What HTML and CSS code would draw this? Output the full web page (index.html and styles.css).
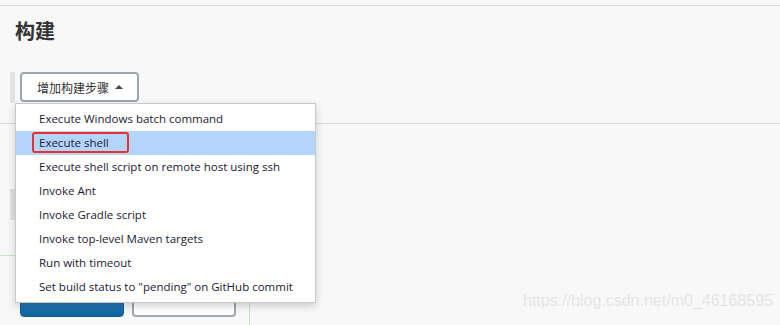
FILE: index.html
```html
<!DOCTYPE html>
<html lang="zh-CN">
<head>
    <meta charset="UTF-8">
    <meta name="viewport" content="width=device-width, initial-scale=1.0">
    <title>构建</title>
    <link rel="stylesheet" href="styles.css">
</head>
<body>
    <div class="top-line"></div>
    <section class="build-section">
        <h2 class="section-title">构建</h2>

        <div class="step-block">
            <button class="add-step">增加构建步骤 <span class="caret"></span></button>
        </div>
        <div class="divider"></div>

        <div class="step-block step-block-lower"></div>

        <div class="form-footer">
            <button class="btn btn-primary">保存</button>
            <button class="btn btn-default">应用</button>
        </div>

        <ul class="step-menu">
            <li>Execute Windows batch command</li>
            <li class="active"><span class="marked">Execute shell</span></li>
            <li>Execute shell script on remote host using ssh</li>
            <li>Invoke Ant</li>
            <li>Invoke Gradle script</li>
            <li>Invoke top-level Maven targets</li>
            <li>Run with timeout</li>
            <li>Set build status to "pending" on GitHub commit</li>
        </ul>
    </section>

    <div class="watermark">https://blog.csdn.net/m0_46168595</div>
</body>
</html>
```

FILE: styles.css
```css
body {
    margin: 0;
    background: #f8f8f8;
    font-family: "Open Sans", "Noto Sans CJK SC", sans-serif;
    color: #333;
    height: 325px;
    overflow: hidden;
}
.top-line {
    height: 5px;
    border-bottom: 1px solid #d6d6d6;
}
.build-section {
    position: relative;
}
.section-title {
    margin: 11px 0 0 15px;
    font-family: "Noto Sans CJK SC", sans-serif;
    font-size: 20px;
    line-height: 28px;
    font-weight: bold;
    color: #333;
}
.step-block {
    margin: 27px 0 0 10px;
    padding-left: 5px;
    border-left: 5px solid #e2e2e2;
    height: 31px;
}
.add-step {
    height: 30px;
    padding: 0 14px 0 15px;
    background: #fff;
    border: 2px solid #9da7b1;
    border-radius: 4px;
    font-family: "Noto Sans CJK SC", sans-serif;
    font-size: 12px;
    color: #333;
    display: flex;
    align-items: center;
    gap: 5px;
}
.caret {
    width: 0;
    height: 0;
    border-left: 4px solid transparent;
    border-right: 4px solid transparent;
    border-bottom: 4px solid #444;
    margin-left: 1px;
}
.divider {
    margin-top: 20px;
    border-top: 1px solid #d8d8d8;
}
.step-block-lower {
    margin-top: 65px;
    height: 31px;
}
.form-footer {
    margin-top: 35px;
    width: 250px;
    height: 80px;
    border-top: 1px solid #c8e2cc;
    border-right: 1px solid #c8e2cc;
    padding: 30px 0 0 20px;
    box-sizing: border-box;
    display: flex;
    gap: 8px;
}
.btn {
    width: 104px;
    height: 31px;
    padding: 0 0 16px;
    border-radius: 4px;
    font-size: 12px;
}
.btn-primary {
    background: linear-gradient(#3c8ed0, #0f649e);
    border: 1px solid #0f5f95;
    color: #fff;
}
.btn-default {
    background: #fff;
    border: 2px solid #9da7b1;
    color: #333;
}
.step-menu {
    position: absolute;
    left: 15px;
    top: 86px;
    width: 299px;
    margin: 0;
    padding: 3px 0;
    list-style: none;
    background: #fff;
    border: 1px solid #c9c9c9;
    box-shadow: 0 3px 8px rgba(0, 0, 0, 0.18);
}
.step-menu li {
    height: 24px;
    line-height: 24px;
    padding-left: 23px;
    font-size: 11.5px;
    color: #1c1a33;
    white-space: nowrap;
}
.step-menu li.active {
    background: #b3d4fc;
}
.marked {
    border: 2px solid #e8312b;
    border-radius: 3px;
    padding: 1px 18px 1px 5px;
    margin-left: -7px;
}
.watermark {
    position: absolute;
    left: 523px;
    top: 292px;
    font-family: "Liberation Sans", Arial, sans-serif;
    font-size: 16px;
    color: #e4e4e4;
    text-shadow: 0 0 1px #fff;
}
```
